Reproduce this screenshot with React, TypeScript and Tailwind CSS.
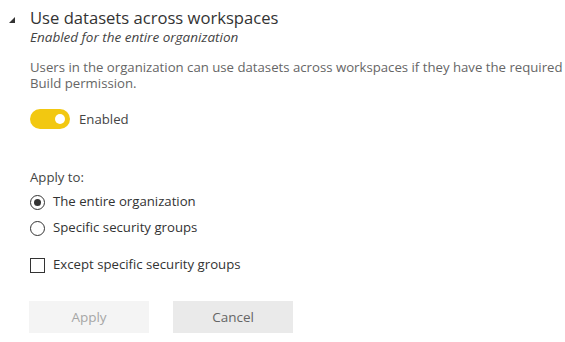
const App = () => {
  return (
    <div className="w-[565px] h-[342px] bg-white overflow-hidden font-['Open_Sans',sans-serif]">
      <div className="flex pt-[7px]">
        {/* collapse arrow */}
        <div className="w-[30px] flex justify-start pl-[9px] pt-[10px]">
          <svg width="6" height="6" viewBox="0 0 6 6">
            <polygon points="6,0 6,6 0,6" fill="#333" />
          </svg>
        </div>
        <div className="w-[535px]">
          <div className="text-[16.6px] leading-[22px] text-[#333]">
            Use datasets across workspaces
          </div>
          <div className="text-[13.5px] leading-[18px] italic text-[#444] -mt-[1px]">
            Enabled for the entire organization
          </div>
          <p className="text-[13.2px] leading-[16px] text-[#666] mt-[13px]">
            Users in the organization can use datasets across workspaces if they have the required Build permission.
          </p>

          <label className="flex items-center gap-[9px] mt-[18px]">
            <span className="relative w-[40px] h-[20px] rounded-full bg-[#f2c811]">
              <span className="absolute right-[5px] top-[5px] w-[10px] h-[10px] rounded-full bg-white" />
            </span>
            <span className="text-[13.2px] leading-[20px] text-[#444]">Enabled</span>
          </label>

          <div className="text-[13.2px] leading-[20px] text-[#444] mt-[38px]">Apply to:</div>

          <div className="flex flex-col gap-[6px] mt-[5px]">
            <label className="flex items-center gap-[8px] h-[20px]">
              <span className="w-[15px] h-[15px] rounded-full border border-[#333] flex items-center justify-center">
                <span className="w-[7px] h-[7px] rounded-full bg-[#333]" />
              </span>
              <span className="text-[13.2px] text-[#333]">The entire organization</span>
            </label>
            <label className="flex items-center gap-[8px] h-[20px]">
              <span className="w-[15px] h-[15px] rounded-full border border-[#333]" />
              <span className="text-[13.2px] text-[#333]">Specific security groups</span>
            </label>
          </div>

          <label className="flex items-center gap-[8px] h-[20px] mt-[17px]">
            <span className="w-[15px] h-[15px] border border-[#333]" />
            <span className="text-[13.2px] text-[#333]">Except specific security groups</span>
          </label>

          <div className="flex gap-[24px] mt-[26px] -ml-[1px]">
            <button className="w-[120px] h-[32px] bg-[#f4f4f4] text-[#a6a6a6] text-[13.5px]">Apply</button>
            <button className="w-[120px] h-[32px] bg-[#eaeaea] text-[#666] text-[13.5px]">Cancel</button>
          </div>
        </div>
      </div>
    </div>
  );
};

export default App;
